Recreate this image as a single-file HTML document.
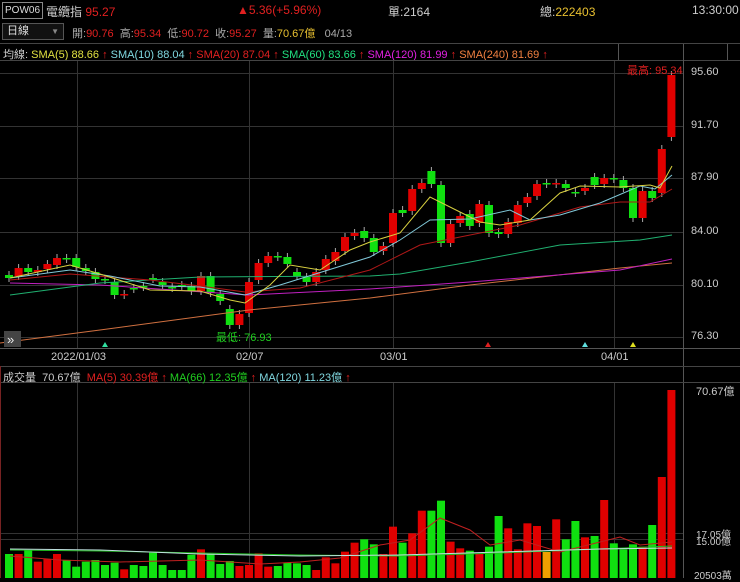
<!DOCTYPE html>
<html><head><meta charset="utf-8"><style>
*{margin:0;padding:0;box-sizing:border-box}
body{width:740px;height:578px;background:#000;overflow:hidden;font-family:"Liberation Sans","Noto Sans CJK TC",sans-serif;font-size:11px;color:#ccc;position:relative}
.a{position:absolute;white-space:nowrap}
.r{color:#e02020}.y{color:#e8c030}.g{color:#20d020}.c{color:#80d8e0}.m{color:#e020e0}.o{color:#f08040}.yl{color:#e0e040}.gg{color:#20e080}
</style></head><body>
<div class="a" style="left:2px;top:2px;width:41px;height:17px;border:1px solid #888;color:#ddd;font-size:10px;line-height:15px;padding-left:2px;overflow:hidden">POW06</div>
<div class="a" style="left:46px;top:3px;font-size:12px;color:#ccc">電纜指 <span class="r">95.27</span></div>
<div class="a r" style="left:237px;top:3px;font-size:12px">▲5.36(+5.96%)</div>
<div class="a" style="left:388px;top:3px;font-size:12px">單:2164</div>
<div class="a" style="left:540px;top:3px;font-size:12px">總:<span class="y">222403</span></div>
<div class="a" style="left:692px;top:3px;font-size:12px">13:30:00</div>
<div class="a" style="left:2px;top:23px;width:62px;height:17px;border:1px solid #555;background:#111;font-size:11px;line-height:15px;padding-left:4px;color:#ddd">日線<span style="position:absolute;right:4px;color:#888;font-size:8px">▼</span></div>
<div class="a" style="left:72px;top:25px;font-size:11px;color:#aaa">開:<span class="r">90.76</span>&nbsp; 高:<span class="r">95.34</span>&nbsp; 低:<span class="r">90.72</span>&nbsp; 收:<span class="r">95.27</span>&nbsp; 量:<span class="y">70.67億</span>&nbsp;&nbsp; 04/13</div>
<div class="a" style="left:0;top:43px;width:740px;height:1px;background:#444"></div>
<div class="a" style="left:3px;top:46px;font-size:11px">均線: <span class="yl">SMA(5) 88.66</span> <span class="r">↑</span> <span class="c">SMA(10) 88.04</span> <span class="r">↑</span> <span class="r">SMA(20) 87.04 ↑</span> <span class="gg">SMA(60) 83.66</span> <span class="r">↑</span> <span class="m">SMA(120) 81.99</span> <span class="r">↑</span> <span class="o">SMA(240) 81.69</span> <span class="r">↑</span></div>
<div class="a" style="left:0;top:60px;width:740px;height:1px;background:#444"></div>
<div class="a" style="left:683px;top:44px;width:1px;height:534px;background:#555"></div>
<div class="a" style="left:727px;top:44px;width:1px;height:16px;background:#555"></div>
<div class="a" style="left:618px;top:44px;width:1px;height:16px;background:#555"></div>
<svg class="a" style="left:0;top:0" width="740" height="578" id="s">
<g stroke="#333" stroke-width="1">
<line x1="0" y1="73.5" x2="683" y2="73.5"/><line x1="0" y1="126.5" x2="683" y2="126.5"/><line x1="0" y1="178.5" x2="683" y2="178.5"/><line x1="0" y1="232.5" x2="683" y2="232.5"/><line x1="0" y1="285.5" x2="683" y2="285.5"/><line x1="0" y1="337.5" x2="683" y2="337.5"/>
<line x1="77.5" y1="61" x2="77.5" y2="348"/><line x1="249.5" y1="61" x2="249.5" y2="348"/><line x1="393.5" y1="61" x2="393.5" y2="348"/><line x1="614.5" y1="61" x2="614.5" y2="348"/>
<line x1="77.5" y1="383" x2="77.5" y2="578"/><line x1="249.5" y1="383" x2="249.5" y2="578"/><line x1="393.5" y1="383" x2="393.5" y2="578"/><line x1="614.5" y1="383" x2="614.5" y2="578"/>
<line x1="0" y1="533.5" x2="683" y2="533.5"/><line x1="0" y1="539.5" x2="683" y2="539.5"/>
</g>
<line x1="0" y1="348.5" x2="740" y2="348.5" stroke="#555"/>
<line x1="0" y1="366.5" x2="740" y2="366.5" stroke="#444"/>
<line x1="0" y1="382.5" x2="740" y2="382.5" stroke="#444"/>
<line x1="0.5" y1="366" x2="0.5" y2="578" stroke="#722"/>
<g id="cd"></g>
<g fill="none" stroke-width="1">
<polyline stroke="#d07040" points="0,343 100,330 249,310 370,298 470,285 620,268 672,263"/>
<polyline stroke="#c020c0" points="10,283 100,285 248,295 370,289 470,282 620,270 672,259"/>
<polyline stroke="#20b070" points="10,295 100,283 200,277 370,276 400,274 470,262 560,245 640,240 672,235"/>
<polyline stroke="#b01818" points="10,280 70,274 150,280 200,286 245,292 300,288 370,270 420,245 440,241 520,225 580,207 620,202 650,202 672,189"/>
<polyline stroke="#80c8d8" points="10,278 70,270 110,276 160,286 200,287 245,295 280,285 370,257 400,240 430,220 470,219 510,210 530,220 560,215 600,203 640,186 655,189 672,175"/>
<polyline stroke="#d8d040" points="10,278 70,265 100,274 150,290 200,291 230,300 245,303 270,285 290,265 320,270 350,250 370,242 400,233 430,197 460,212 480,222 500,225 530,220 560,193 580,186 620,187 650,185 660,188 672,166"/>
<polyline stroke="#c02020" points="10,556 60,560 120,562 200,560 260,564 300,562 340,558 380,545 410,540 440,518 470,530 490,545 520,540 560,552 620,537 640,545 672,542"/>
<polyline stroke="#20c020" points="10,550 100,551 200,553 300,555 400,556 500,553 600,549 672,546"/>
<polyline stroke="#c0e0e0" points="10,549 100,550 200,554 300,556 400,555 500,552 600,549 672,548"/>
</g>
<polygon points="102,347 105,342 108,347" fill="#30e0a0"/>
<polygon points="485,347 488,342 491,347" fill="#e02020"/>
<polygon points="582,347 585,342 588,347" fill="#60e0e0"/>
<polygon points="630,347 633,342 636,347" fill="#e0e020"/>
<rect x="4" y="331" width="17" height="16" fill="#444"/>
<text x="7" y="344" fill="#eee" font-size="13" font-family="Liberation Sans">»</text>
</svg>
<div class="a r" style="left:627px;top:62px;font-size:11px">最高: 95.34</div>
<div class="a g" style="left:216px;top:329px;font-size:11px">最低: 76.93</div>
<div class="a" style="left:691px;top:66px">95.60</div>
<div class="a" style="left:691px;top:119px">91.70</div>
<div class="a" style="left:691px;top:171px">87.90</div>
<div class="a" style="left:691px;top:225px">84.00</div>
<div class="a" style="left:691px;top:278px">80.10</div>
<div class="a" style="left:691px;top:330px">76.30</div>
<div class="a" style="left:51px;top:351px">2022/01/03</div>
<div class="a" style="left:236px;top:351px">02/07</div>
<div class="a" style="left:380px;top:351px">03/01</div>
<div class="a" style="left:601px;top:351px">04/01</div>
<div class="a" style="left:3px;top:369px">成交量 &nbsp;70.67億 &nbsp;<span class="r">MA(5) 30.39億 ↑</span> <span class="g">MA(66) 12.35億</span> <span class="r">↑</span> <span class="c">MA(120) 11.23億</span> <span class="r">↑</span></div>
<div class="a" style="left:696px;top:383px">70.67億</div>
<div class="a" style="left:696px;top:526px;font-size:10px">17.05億</div>
<div class="a" style="left:696px;top:533px;font-size:10px">15.00億</div>
<div class="a" style="left:694px;top:567px;font-size:10px">20503萬</div>
<script>
var C=[[275,278,'g'],[276,268,'r'],[272,268,'g'],[272,270,'r'],[269,264,'r'],[265,258,'r'],[258,259,'g'],[258,267,'g'],[268,271,'g'],[272,279,'g'],[279,280,'g'],[282,295,'g'],[295,294,'r'],[288,289,'g'],[286,287,'g'],[278,279,'g'],[282,285,'g'],[287,288,'g'],[285,286,'g'],[286,291,'g'],[291,276,'r'],[276,293,'g'],[294,301,'g'],[309,325,'g'],[325,314,'r'],[313,282,'r'],[280,263,'r'],[263,256,'r'],[256,257,'g'],[257,264,'g'],[272,276,'g'],[277,282,'g'],[282,272,'r'],[270,259,'r'],[261,252,'r'],[251,237,'r'],[236,233,'r'],[231,238,'g'],[238,252,'g'],[251,246,'r'],[243,213,'r'],[210,213,'g'],[211,189,'r'],[189,183,'r'],[171,184,'g'],[185,243,'g'],[243,224,'r'],[223,216,'r'],[214,226,'g'],[223,204,'r'],[205,233,'g'],[232,234,'g'],[234,222,'r'],[223,205,'r'],[203,197,'r'],[196,184,'r'],[183,184,'g'],[184,183,'r'],[184,188,'g'],[192,193,'g'],[191,188,'r'],[177,185,'g'],[184,178,'r'],[178,179,'g'],[180,188,'g'],[188,218,'g'],[218,191,'r'],[191,198,'g'],[193,149,'r'],[137,75,'r']];
var V=[222,222,210,245,237,222,240,260,245,240,255,248,268,255,258,218,255,270,270,224,208,222,252,243,258,255,220,260,258,248,250,255,270,232,250,215,188,178,193,222,140,188,160,92,92,62,185,205,212,222,200,108,145,208,130,138,216,118,178,123,172,168,60,190,208,193,200,135,0,0];
var h='';
for(var i=0;i<C.length;i++){var x=5+i*9.6,c=C[i],col=c[2]=='r'?'#e00000':'#10e010';var t=Math.min(c[0],c[1]),b=Math.max(c[0],c[1]);
h+='<line x1="'+(x+4)+'" y1="'+(t-4)+'" x2="'+(x+4)+'" y2="'+(b+4)+'" stroke="#aaa"/>';
h+='<rect x="'+x+'" y="'+t+'" width="8" height="'+Math.max(1.5,b-t)+'" fill="'+col+'"/>';
var vt=480+V[i]/3;if(i==68)vt=477;if(i==69)vt=390;var vc=i==56?'#f0a000':col;
h+='<rect x="'+x+'" y="'+vt+'" width="8" height="'+(578-vt)+'" fill="'+vc+'"/>';}
document.getElementById('cd').innerHTML=h;
</script>
</body></html>
